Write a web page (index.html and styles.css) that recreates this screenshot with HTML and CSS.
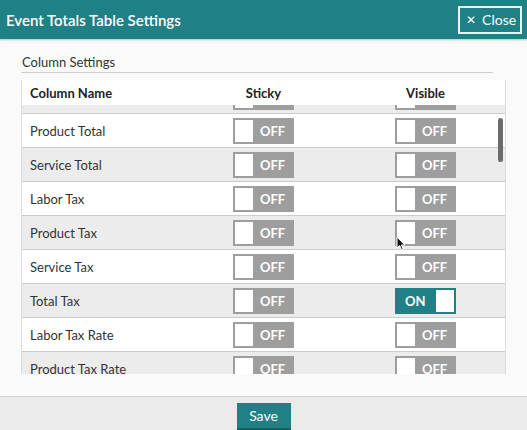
FILE: index.html
```html
<!DOCTYPE html>
<html lang="en">
  <head>
    <meta charset="UTF-8" />
    <meta name="viewport" content="width=device-width, initial-scale=1.0" />
    <title>Event Totals Table Settings</title>
    <link rel="stylesheet" href="styles.css">
  </head>
  <body>
    <div class="modal">
      <header class="modal-header">
        <h1 class="modal-title">Event Totals Table Settings</h1>
        <button class="close-btn"><span class="close-x">&#x2715;</span> Close</button>
      </header>

      <div class="modal-body">
        <div class="section-title">Column Settings</div>
        <div class="table-wrap">
          <div class="row table-head">
            <div class="cell name">Column Name</div>
            <div class="cell"><span class="head-label">Sticky</span></div>
            <div class="cell"><span class="head-label">Visible</span></div>
          </div>
          <div class="table-body">
            <div class="rows">
              <!-- row scrolled mostly out of view -->
              <div class="row alt">
                <div class="cell name"></div>
                <div class="cell"><span class="toggle"><span class="knob"></span></span></div>
                <div class="cell"><span class="toggle"><span class="knob"></span></span></div>
              </div>
              <div class="row">
                <div class="cell name">Product Total</div>
                <div class="cell"><span class="toggle"><span class="knob"></span><span class="label">OFF</span></span></div>
                <div class="cell"><span class="toggle"><span class="knob"></span><span class="label">OFF</span></span></div>
              </div>
              <div class="row alt">
                <div class="cell name">Service Total</div>
                <div class="cell"><span class="toggle"><span class="knob"></span><span class="label">OFF</span></span></div>
                <div class="cell"><span class="toggle"><span class="knob"></span><span class="label">OFF</span></span></div>
              </div>
              <div class="row">
                <div class="cell name">Labor Tax</div>
                <div class="cell"><span class="toggle"><span class="knob"></span><span class="label">OFF</span></span></div>
                <div class="cell"><span class="toggle"><span class="knob"></span><span class="label">OFF</span></span></div>
              </div>
              <div class="row alt">
                <div class="cell name">Product Tax</div>
                <div class="cell"><span class="toggle"><span class="knob"></span><span class="label">OFF</span></span></div>
                <div class="cell"><span class="toggle"><span class="knob"></span><span class="label">OFF</span></span></div>
              </div>
              <div class="row">
                <div class="cell name">Service Tax</div>
                <div class="cell"><span class="toggle"><span class="knob"></span><span class="label">OFF</span></span></div>
                <div class="cell"><span class="toggle"><span class="knob"></span><span class="label">OFF</span></span></div>
              </div>
              <div class="row alt">
                <div class="cell name">Total Tax</div>
                <div class="cell"><span class="toggle"><span class="knob"></span><span class="label">OFF</span></span></div>
                <div class="cell"><span class="toggle on"><span class="knob"></span><span class="label">ON</span></span></div>
              </div>
              <div class="row">
                <div class="cell name">Labor Tax Rate</div>
                <div class="cell"><span class="toggle"><span class="knob"></span><span class="label">OFF</span></span></div>
                <div class="cell"><span class="toggle"><span class="knob"></span><span class="label">OFF</span></span></div>
              </div>
              <div class="row alt">
                <div class="cell name">Product Tax Rate</div>
                <div class="cell"><span class="toggle"><span class="knob"></span><span class="label">OFF</span></span></div>
                <div class="cell"><span class="toggle"><span class="knob"></span><span class="label">OFF</span></span></div>
              </div>
            </div>
          </div>
          <div class="scroll-thumb"></div>
        </div>
      </div>

      <footer class="modal-footer">
        <button class="save-btn">Save</button>
      </footer>

      <!-- mouse pointer -->
      <svg class="cursor" width="10" height="15" viewBox="0 0 10 15">
        <path d="M1 1 L1 12 L3.6 9.6 L5.6 14 L7.2 13.3 L5.3 9 L8.8 9 Z" fill="#111" stroke="#fff" stroke-width="1"/>
      </svg>
    </div>
  </body>
</html>
```

FILE: styles.css
```css
body {
  margin: 0;
  padding: 0;
  font-family: Lato, "Liberation Sans", sans-serif;
  color: #333;
  background-color: #fafafa;
}

.modal {
  position: relative;
  width: 527px;
  height: 430px;
  display: flex;
  flex-direction: column;
  overflow: hidden;
}

.modal-header {
  flex-shrink: 0;
  height: 39px;
  background-color: #1f8085;
  display: flex;
  align-items: center;
  justify-content: space-between;
  padding: 0 5px 0 6px;
  box-shadow: 0 1px 2px rgba(0, 0, 0, 0.25);
}

.modal-title {
  margin: 0;
  font-size: 15px;
  font-weight: 600;
  color: #fff;
}

.close-btn {
  height: 28px;
  width: 64px;
  padding: 0 0 0 6px;
  border: 2px solid #e9f3f3;
  background: transparent;
  color: #fff;
  font-family: Lato, "Liberation Sans", sans-serif;
  font-size: 14px;
  display: flex;
  align-items: center;
  gap: 6px;
}
.close-x {
  font-family: "DejaVu Sans", sans-serif;
  font-size: 12px;
}

.modal-body {
  flex: 1;
  min-height: 0;
  padding: 15px 21px 22px 21px;
  display: flex;
  flex-direction: column;
}

.section-title {
  flex-shrink: 0;
  font-size: 13px;
  line-height: 16px;
  padding: 0 0 2px 1px;
  margin-right: 13px;
  border-bottom: 1px solid #cfcfcf;
  color: #333;
}

.table-wrap {
  position: relative;
  margin-top: 7px;
  border-left: 1px solid #dcdcdc;
  border-right: 1px solid #dcdcdc;
  flex: 1;
  min-height: 0;
  display: flex;
  flex-direction: column;
  background-color: #fff;
}

.row {
  flex-shrink: 0;
  display: grid;
  grid-template-columns: 211px 162px 1fr;
  align-items: center;
  height: 33px;
  border-bottom: 1px solid #cccccc;
  background-color: #fff;
  font-size: 13px;
}
.row.alt {
  background-color: #ececec;
}
.cell.name {
  padding-left: 8px;
}

.table-head {
  height: 25px;
  border-bottom: none;
  font-weight: 700;
  color: #222;
}
.head-label {
  display: inline-block;
  width: 61px;
  text-align: center;
}

.table-body {
  flex: 1;
  min-height: 0;
  overflow: hidden;
}
.rows {
  margin-top: -25px;
}

.toggle {
  display: flex;
  align-items: center;
  width: 61px;
  height: 26px;
  box-sizing: border-box;
  padding: 2px;
  background-color: #9e9e9e;
}
.toggle .knob {
  width: 18px;
  height: 22px;
  background-color: #fff;
}
.toggle .label {
  flex: 1;
  text-align: center;
  color: #fff;
  font-weight: 700;
  font-size: 13px;
}
.toggle.on {
  flex-direction: row-reverse;
  background-color: #1f8085;
}
.toggle.on .label {
  text-align: left;
  padding-left: 8px;
}

.scroll-thumb {
  position: absolute;
  right: 2px;
  top: 38px;
  width: 5px;
  height: 44px;
  border-radius: 3px;
  background-color: #6b6b6b;
}

.modal-footer {
  flex-shrink: 0;
  height: 27px;
  border-top: 1px solid #d0d0d0;
  background-color: #ebebeb;
  display: flex;
  justify-content: center;
  align-items: flex-start;
  padding-top: 6px;
}

.save-btn {
  width: 54px;
  height: 27px;
  border: none;
  border-bottom: 2px solid #15605f;
  background-color: #1f8085;
  color: #fff;
  font-family: Lato, "Liberation Sans", sans-serif;
  font-size: 14px;
}

.cursor {
  position: absolute;
  left: 396px;
  top: 236px;
}
```
